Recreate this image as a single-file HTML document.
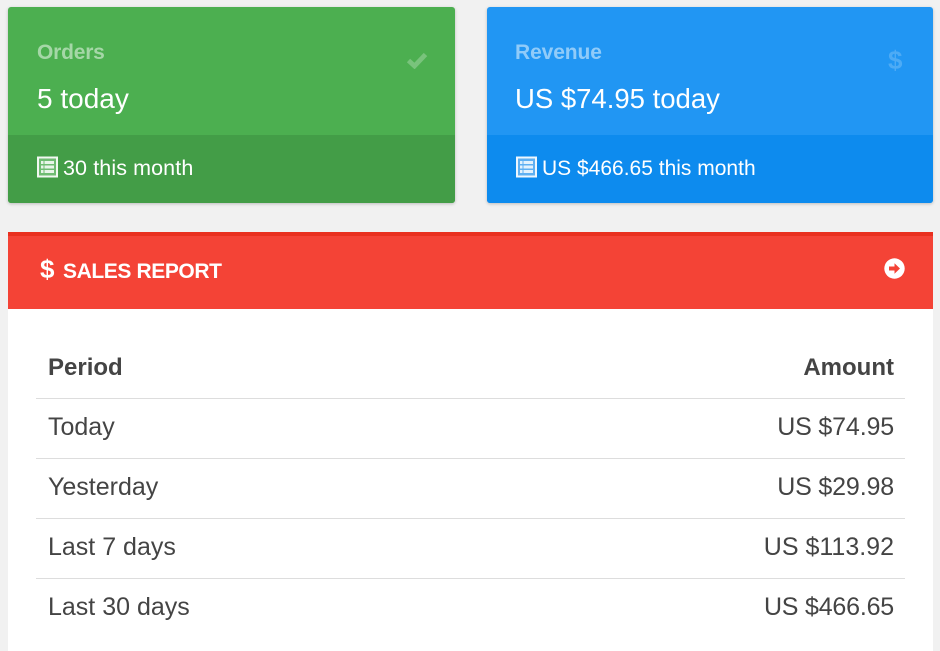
<!DOCTYPE html>
<html><head><meta charset="utf-8"><style>
html,body{margin:0;padding:0;width:940px;height:651px;overflow:hidden;background:#f1f1f1;font-family:"Liberation Sans",sans-serif}
.a{position:absolute;white-space:nowrap;line-height:1}
.card{position:absolute;top:7px;height:196px;border-radius:3px;box-shadow:0 1px 3px rgba(0,0,0,.22);overflow:hidden}
.foot{position:absolute;left:0;right:0;top:128px;height:68px}
.line{position:absolute;left:36px;width:869px;height:1px;background:#ddd}
.t{color:#444;font-size:25px}
.h{color:#444;font-size:24px;font-weight:bold}
</style></head><body>
<div class="card" style="left:8px;width:447px;background:#4caf50"><div class="foot" style="background:#439d47"></div></div>
<div class="card" style="left:487px;width:446px;background:#2196f3"><div class="foot" style="background:#0d8bee"></div></div>
<div class="a" style="left:37px;top:42px;font-size:21px;font-weight:bold;color:#a5d7a7;letter-spacing:-.2px">Orders</div>
<div class="a" style="left:37px;top:85px;font-size:28px;color:#fff">5 today</div>
<div class="a" style="left:63px;top:158px;font-size:21.5px;color:#fff;letter-spacing:.1px">30 this month</div>
<svg class="a" style="left:37px;top:156px" width="21" height="22" viewBox="0 0 21 22"><rect x="1" y="1.500" width="19" height="19" fill="#6fbc72" stroke="#f1f8f1" stroke-width="2"/><path d="M4 5h2.500v3H4zM4 9.500h2.500v3H4zM4 14h2.500v3H4zM7.500 5H17v3H7.500zM7.500 9.500H17v3H7.500zM7.500 14H17v3H7.500z" fill="#e8f5e9"/></svg>
<svg class="a" style="left:406px;top:50px" width="22" height="19" viewBox="0 0 22 19"><path d="M2.500 10.500L8.500 16 19.500 4.500" fill="none" stroke="#79c37c" stroke-width="4.800"/></svg>
<div class="a" style="left:515px;top:42px;font-size:21px;font-weight:bold;color:#90cbf9;letter-spacing:-.1px">Revenue</div>
<div class="a" style="left:515px;top:85px;font-size:27.5px;color:#fff">US $74.95 today</div>
<div class="a" style="left:542px;top:158px;font-size:21px;color:#fff">US $466.65 this month</div>
<svg class="a" style="left:516px;top:156px" width="21" height="22" viewBox="0 0 21 22"><rect x="1" y="1.500" width="19" height="19" fill="#5fb0f2" stroke="#eef7fe" stroke-width="2"/><path d="M4 5h2.500v3H4zM4 9.500h2.500v3H4zM4 14h2.500v3H4zM7.500 5H17v3H7.500zM7.500 9.500H17v3H7.500zM7.500 14H17v3H7.500z" fill="#e3f2fd"/></svg>
<div class="a" style="left:888px;top:47px;font-size:26px;font-weight:bold;color:#4dabf5">$</div>
<div style="position:absolute;left:8px;top:232px;width:925px;height:419px;background:#fff"></div>
<div style="position:absolute;left:8px;top:232px;width:925px;height:77px;background:#f44336;border-top:4px solid #e9301f;box-sizing:border-box"></div>
<div class="a" style="left:40px;top:256px;font-size:26px;font-weight:bold;color:#fff">$</div>
<div class="a" style="left:63px;top:261px;font-size:21px;font-weight:bold;color:#fff;letter-spacing:-.4px">SALES REPORT</div>
<svg class="a" style="left:884px;top:258px" width="21" height="21" viewBox="0 0 21 21"><circle cx="10.500" cy="10.500" r="10.200" fill="#fff"/><path d="M5 8.500h5.500V5.300L16 10.500l-5.500 5.200V12.500H5z" fill="#f44336"/></svg>
<div class="a h" style="left:48px;top:356px">Period</div>
<div class="a h" style="right:46px;top:356px">Amount</div>
<div class="line" style="top:398px"></div>
<div class="a t" style="left:48px;top:415px">Today</div>
<div class="a t" style="right:46px;top:415px;letter-spacing:-.15px">US $74.95</div>
<div class="line" style="top:458px"></div>
<div class="a t" style="left:48px;top:475px">Yesterday</div>
<div class="a t" style="right:46px;top:475px;letter-spacing:-.15px">US $29.98</div>
<div class="line" style="top:518px"></div>
<div class="a t" style="left:48px;top:535px">Last 7 days</div>
<div class="a t" style="right:46px;top:535px">US $113.92</div>
<div class="line" style="top:578px"></div>
<div class="a t" style="left:48px;top:595px">Last 30 days</div>
<div class="a t" style="right:46px;top:595px;letter-spacing:-.2px">US $466.65</div>
</body></html>
